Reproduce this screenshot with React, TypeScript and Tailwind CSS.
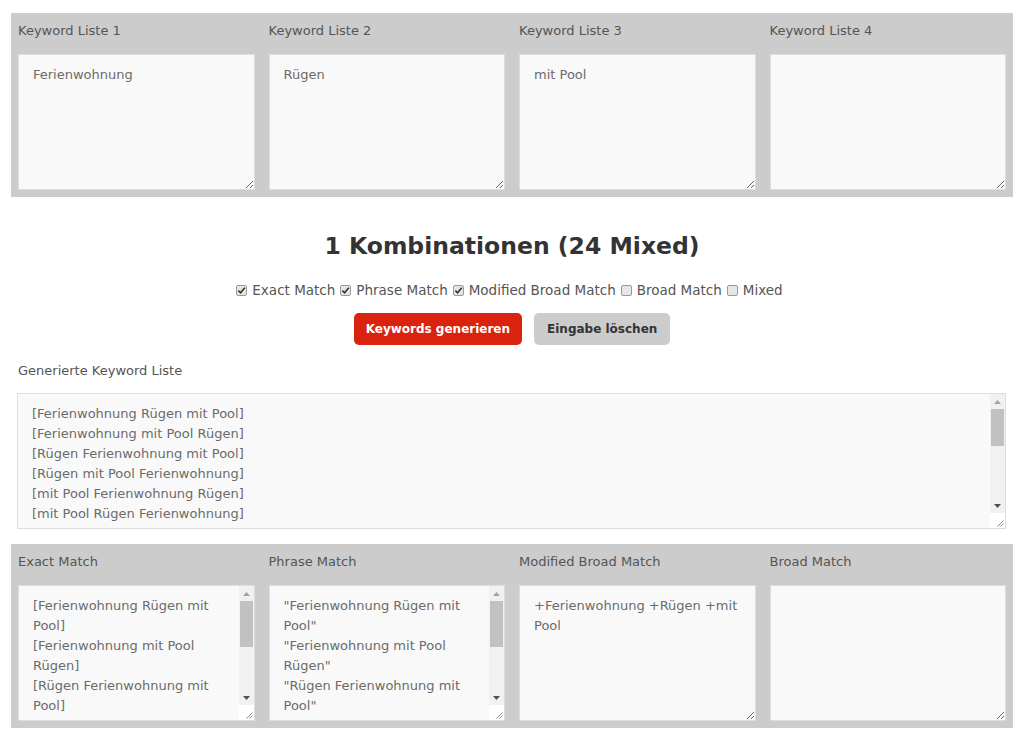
import React from "react"

const font = { fontFamily: '"DejaVu Sans", Verdana, sans-serif' }

const combos = [
  ["Ferienwohnung", "Rügen", "mit Pool"],
  ["Ferienwohnung", "mit Pool", "Rügen"],
  ["Rügen", "Ferienwohnung", "mit Pool"],
  ["Rügen", "mit Pool", "Ferienwohnung"],
  ["mit Pool", "Ferienwohnung", "Rügen"],
  ["mit Pool", "Rügen", "Ferienwohnung"],
]

const exact = combos.map((c) => `[${c.join(" ")}]`).join("\n")
const phrase = combos.map((c) => `"${c.join(" ")}"`).join("\n")
const modified = combos.map((c) => "+" + c.join(" +")).join("\n")
const all = [exact, phrase, modified].join("\n")

const textCls =
  "text-[13px] leading-[20px] text-[#6b6b6b] px-[14px] py-[10px] outline-none"

function Grip() {
  return (
    <svg viewBox="0 0 8 8" className="w-[8px] h-[8px]">
      <path d="M7.5 1.5 L1.5 7.5 M7.5 4.5 L4.5 7.5" stroke="#8a8a8a" strokeWidth="1" />
    </svg>
  )
}

/* gezeichnete Scrollbar (headless zeigt keine nativen) */
function Scrollbar({ thumb }: { thumb: number }) {
  return (
    <div className="w-[15px] flex flex-col shrink-0">
      <div className="flex-1 flex flex-col bg-[#f1f1f1]">
        <div className="h-[15px] flex items-center justify-center">
          <svg viewBox="0 0 7 4" className="w-[7px] h-[4px]">
            <path d="M0 4 L3.5 0 L7 4 Z" fill="#a3a3a3" />
          </svg>
        </div>
        <div className="flex-1 px-[1px]">
          <div className="bg-[#c1c1c1] w-full" style={{ height: thumb }} />
        </div>
        <div className="h-[15px] flex items-center justify-center">
          <svg viewBox="0 0 7 4" className="w-[7px] h-[4px]">
            <path d="M0 0 L7 0 L3.5 4 Z" fill="#505050" />
          </svg>
        </div>
      </div>
      <div className="h-[15px] bg-white flex items-end justify-end p-[1px]">
        <Grip />
      </div>
    </div>
  )
}

function Box({ value, thumb, wide }: { value: string; thumb?: number; wide?: boolean }) {
  if (!thumb)
    return (
      <textarea
        readOnly
        value={value}
        className={"block w-full h-[136px] bg-[#f9f9f9] border border-[#dddddd] resize-y " + textCls}
        style={font}
      />
    )
  return (
    <div className={"flex h-[136px] bg-[#f9f9f9] border border-[#dddddd] " + (wide ? "w-[989px]" : "w-full")}>
      <textarea
        readOnly
        value={value}
        className={"flex-1 min-w-0 bg-transparent resize-none overflow-hidden " + textCls}
        style={font}
      />
      <Scrollbar thumb={thumb} />
    </div>
  )
}

function Field({ label, value, thumb }: { label: string; value: string; thumb?: number }) {
  return (
    <div>
      <div className="text-[13px] leading-[20px] text-[#555555] mb-[13px]">{label}</div>
      <Box value={value} thumb={thumb} />
    </div>
  )
}

function Check({ label, checked }: { label: string; checked: boolean }) {
  return (
    <label className="inline-flex items-center gap-[5px] mr-[5px]">
      <span className="w-[11px] h-[11px] border border-[#999999] rounded-[2px] bg-[#e6e6e6] flex items-center justify-center">
        {checked && (
          <svg viewBox="0 0 10 10" className="w-[9px] h-[9px]">
            <path d="M1.5 5.2 L4 7.6 L8.6 2" fill="none" stroke="#333" strokeWidth="1.8" />
          </svg>
        )}
      </span>
      <span>{label}</span>
    </label>
  )
}

export default function App() {
  return (
    <div className="bg-white min-h-[735px] px-[11px] pt-[13px]" style={font}>
      {/* Eingabe-Listen */}
      <div className="bg-[#cccccc] px-[7px] pt-[8px] pb-[7px] grid grid-cols-4 gap-x-[14px]">
        <Field label="Keyword Liste 1" value="Ferienwohnung" />
        <Field label="Keyword Liste 2" value="Rügen" />
        <Field label="Keyword Liste 3" value="mit Pool" />
        <Field label="Keyword Liste 4" value="" />
      </div>

      <h1 className="text-center font-bold text-[23.5px] leading-[30px] text-[#333333] mt-[34px]">
        1 Kombinationen (24 Mixed)
      </h1>

      <div className="flex justify-center text-[13.5px] leading-[20px] text-[#555555] mt-[19px]">
        <Check label="Exact Match" checked />
        <Check label="Phrase Match" checked />
        <Check label="Modified Broad Match" checked />
        <Check label="Broad Match" checked={false} />
        <Check label="Mixed" checked={false} />
      </div>

      <div className="flex justify-center gap-[12px] mt-[13px]">
        <button className="h-[32px] px-[12px] rounded-[5px] bg-[#d9230f] text-white text-[12px] font-bold">
          Keywords generieren
        </button>
        <button className="h-[32px] px-[13px] rounded-[5px] bg-[#cccccc] text-[#333333] text-[12px] font-bold">
          Eingabe löschen
        </button>
      </div>

      <div className="px-[6px] mt-[16px]">
        <div className="text-[13px] leading-[20px] text-[#555555] ml-[1px] mb-[12px]">Generierte Keyword Liste</div>
        <Box value={all} thumb={37} wide />
      </div>

      {/* Ergebnisse */}
      <div className="bg-[#cccccc] px-[7px] pt-[8px] pb-[7px] grid grid-cols-4 gap-x-[14px] mt-[15px]">
        <Field label="Exact Match" value={exact} thumb={46} />
        <Field label="Phrase Match" value={phrase} thumb={46} />
        <Field label="Modified Broad Match" value="+Ferienwohnung +Rügen +mit Pool" />
        <Field label="Broad Match" value="" />
      </div>
    </div>
  )
}
